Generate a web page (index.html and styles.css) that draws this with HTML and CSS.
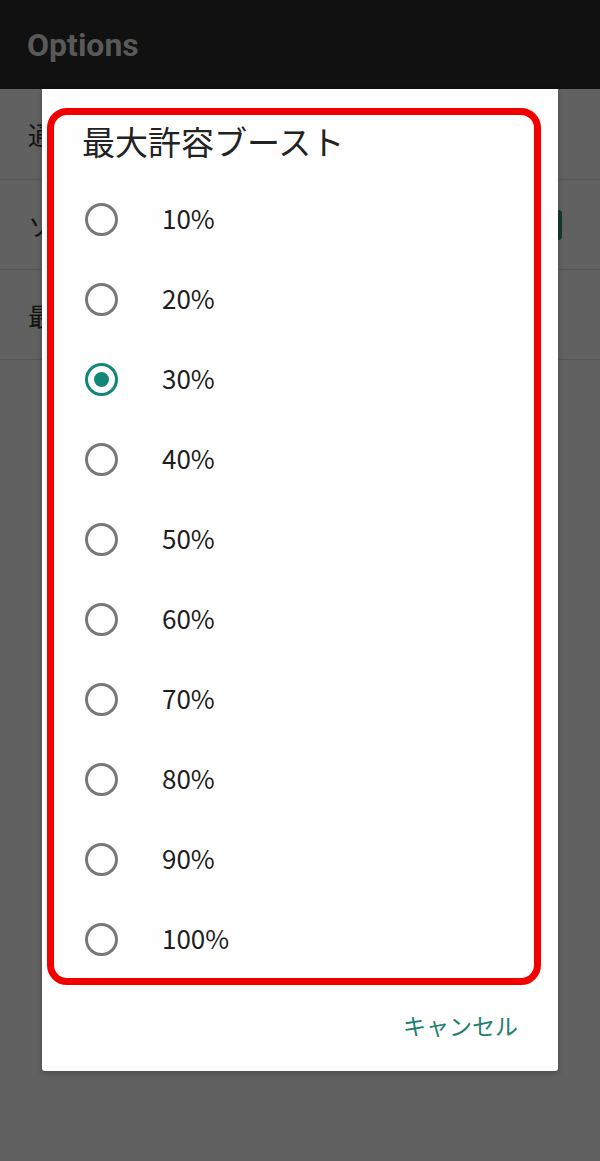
FILE: index.html
```html
<!DOCTYPE html>
<html lang="ja">
<head>
<meta charset="utf-8">
<title>Options</title>
<link rel="stylesheet" href="styles.css">
</head>
<body>
<div class="app">
  <header class="appbar"><span class="appbar-title">Options</span></header>
  <div class="pref-list">
    <div class="pref"><span class="pref-title">通</span></div>
    <div class="pref"><span class="pref-title">ソ</span><span class="switch"></span></div>
    <div class="pref"><span class="pref-title">最</span></div>
  </div>
</div>
<div class="dialog">
  <div class="dialog-title">最大許容ブースト</div>
  <ul class="options">
    <li class="option"><span class="radio"></span><span class="label">10%</span></li>
    <li class="option"><span class="radio"></span><span class="label">20%</span></li>
    <li class="option"><span class="radio checked"></span><span class="label">30%</span></li>
    <li class="option"><span class="radio"></span><span class="label">40%</span></li>
    <li class="option"><span class="radio"></span><span class="label">50%</span></li>
    <li class="option"><span class="radio"></span><span class="label">60%</span></li>
    <li class="option"><span class="radio"></span><span class="label">70%</span></li>
    <li class="option"><span class="radio"></span><span class="label">80%</span></li>
    <li class="option"><span class="radio"></span><span class="label">90%</span></li>
    <li class="option"><span class="radio"></span><span class="label">100%</span></li>
  </ul>
  <div class="actions"><button class="btn">キャンセル</button></div>
  <div class="highlight"></div>
</div>
</body>
</html>
```
FILE: styles.css
```css
html, body {
  margin: 0;
  padding: 0;
}
body {
  width: 600px;
  height: 1161px;
  background: #616161;
  font-family: "Noto Sans CJK JP", "Noto Sans", sans-serif;
  overflow: hidden;
  position: relative;
}
.appbar {
  height: 89px;
  background: #111111;
  display: flex;
  align-items: center;
  padding-left: 27px;
  box-sizing: border-box;
}
.appbar-title {
  font-family: Roboto, "Liberation Sans", sans-serif;
  font-weight: 700;
  font-size: 32px;
  color: #595959;
  line-height: 1;
}
.pref {
  height: 90px;
  border-bottom: 1px solid #575757;
  display: flex;
  align-items: center;
  justify-content: space-between;
  padding: 0 38px 0 28px;
  box-sizing: border-box;
}
.pref:first-child { height: 91px; }
.pref-title {
  font-size: 25px;
  color: #121212;
  white-space: nowrap;
}
.switch {
  width: 40px;
  height: 30px;
  border-radius: 4px;
  background: #17392d;
}
.dialog {
  position: absolute;
  left: 42px;
  top: 89px;
  width: 516px;
  height: 982px;
  background: #fefefe;
  border-radius: 0 0 3px 3px;
  box-shadow: 0 2px 6px rgba(0,0,0,0.25);
  display: flex;
  flex-direction: column;
}
.dialog-title {
  padding: 32px 0 0 40px;
  height: 40px;
  line-height: 40px;
  font-size: 33px;
  color: #222222;
  margin-bottom: 18px;
}
.options {
  list-style: none;
  margin: 0;
  padding: 0;
}
.option {
  height: 80px;
  display: flex;
  align-items: center;
  padding-left: 43px;
}
.radio {
  width: 33px;
  height: 33px;
  box-sizing: border-box;
  border: 3px solid #777777;
  border-radius: 50%;
  display: flex;
  align-items: center;
  justify-content: center;
  flex: none;
}
.radio.checked {
  border-color: #11877a;
}
.radio.checked::after {
  content: "";
  width: 15px;
  height: 15px;
  border-radius: 50%;
  background: #11877a;
}
.label {
  margin-left: 44px;
  font-size: 26px;
  line-height: 1;
  margin-top: -3px;
  color: #1e1e1e;
}
.actions {
  margin-top: 30px;
  display: flex;
  justify-content: flex-end;
  padding-right: 40px;
}
.btn {
  border: none;
  background: none;
  padding: 0;
  height: 32px;
  line-height: 32px;
  font-family: "Noto Sans CJK JP", sans-serif;
  font-size: 23px;
  color: #1f7f6e;
}
.highlight {
  position: absolute;
  left: 5px;
  top: 19px;
  width: 494px;
  height: 877px;
  box-sizing: border-box;
  border: 7px solid #f20000;
  border-radius: 20px;
  pointer-events: none;
}
```
